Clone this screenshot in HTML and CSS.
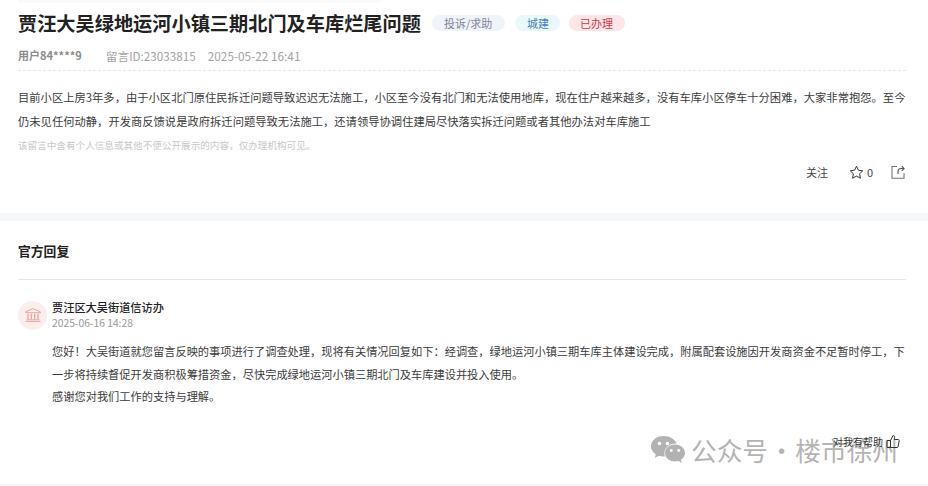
FILE: index.html
```html
<!DOCTYPE html>
<html lang="zh-CN">
<head>
<meta charset="utf-8">
<title>贾汪大吴绿地运河小镇三期北门及车库烂尾问题</title>
<link rel="stylesheet" href="styles.css">
</head>
<body>
<div class="page">
  <div class="top-strip"></div>
  <section class="message">
    <header class="title-row">
      <h1 class="title">贾汪大吴绿地运河小镇三期北门及车库烂尾问题</h1>
      <span class="tag tag-gray">投诉/求助</span>
      <span class="tag tag-blue">城建</span>
      <span class="tag tag-red">已办理</span>
    </header>
    <div class="meta">
      <span class="user">用户84****9</span>
      <span class="mid">留言ID:23033815</span>
      <span class="date">2025-05-22 16:41</span>
    </div>
    <p class="body-text">目前小区上房3年多，由于小区北门原住民拆迁问题导致迟迟无法施工，小区至今没有北门和无法使用地库，现在住户越来越多，没有车库小区停车十分困难，大家非常抱怨。至今仍未见任何动静，开发商反馈说是政府拆迁问题导致无法施工，还请领导协调住建局尽快落实拆迁问题或者其他办法对车库施工</p>
    <p class="notice">该留言中含有个人信息或其他不便公开展示的内容，仅办理机构可见。</p>
    <div class="actions">
      <span class="follow">关注</span>
      <span class="star">
        <svg class="icon-star" width="15" height="15" viewBox="0 0 15 15"><path d="M7.500 1.200l1.900 4 4.300.6-3.100 3 .8 4.400-3.900-2.100-3.900 2.100.8-4.400-3.100-3 4.300-.6z" fill="none" stroke="#333" stroke-width="1" stroke-linejoin="round"/></svg>
        <span>0</span>
      </span>
      <svg class="icon-share" width="14" height="14" viewBox="0 0 14 14"><path d="M6 1.500H1v11.800h12V8" fill="none" stroke="#777" stroke-width="1.100"/><path d="M7 9V6.500C7 4.500 8 3.500 10 3.500h2.800M10.800 1.200l2.300 2.300-2.300 2.300" fill="none" stroke="#555" stroke-width="1.100"/></svg>
    </div>
  </section>
  <div class="divider-band"></div>
  <section class="reply">
    <h2 class="reply-title">官方回复</h2>
    <div class="org">
      <div class="org-avatar">
        <svg width="16" height="14" viewBox="0 0 16 14"><path d="M8 .6L15.400 3.800v.9H.6v-.9z" fill="none" stroke="#e9a3a1" stroke-width="1" stroke-linejoin="round"/><path d="M3 5.800v5.400M6.300 5.800v5.400M9.700 5.800v5.400M13 5.800v5.400" stroke="#e9a3a1" stroke-width="1.300"/><path d="M1.500 11.800h13M.5 13.400h15" stroke="#e9a3a1" stroke-width="1"/></svg>
      </div>
      <div class="org-info">
        <div class="org-name">贾汪区大吴街道信访办</div>
        <div class="org-date">2025-06-16 14:28</div>
      </div>
    </div>
    <div class="reply-text">
      <p>您好！大吴街道就您留言反映的事项进行了调查处理，现将有关情况回复如下：经调查，绿地运河小镇三期车库主体建设完成，附属配套设施因开发商资金不足暂时停工，下一步将持续督促开发商积极筹措资金，尽快完成绿地运河小镇三期北门及车库建设并投入使用。</p>
      <p>感谢您对我们工作的支持与理解。</p>
    </div>
  </section>
  <div class="bottom-band"></div>
  <div class="watermark">
    <svg width="36" height="30" viewBox="0 0 36 30"><path d="M13.500 1C6.500 1 1 5.600 1 11.300c0 3.300 1.900 6.200 4.800 8.100L4.700 23l4.200-2.200c1.500.4 3 .7 4.600.7.500 0 1 0 1.400-.1-.3-1-.5-2-.5-3 0-5.600 5-10 11.300-10h.8C24.900 4.100 19.700 1 13.500 1z" fill="#b2b2b2"/><circle cx="9.500" cy="8.500" r="1.700" fill="#fff"/><circle cx="17.500" cy="8.500" r="1.700" fill="#fff"/><path d="M25 9.500c-5.700 0-10 3.800-10 8.500s4.300 8.500 10 8.500c1.200 0 2.300-.2 3.400-.5l3.400 1.900-.9-3.100c2.500-1.600 4.100-4 4.100-6.800 0-4.700-4.300-8.500-10-8.500z" fill="#b2b2b2"/><circle cx="21.300" cy="15.500" r="1.400" fill="#fff"/><circle cx="28.700" cy="15.500" r="1.400" fill="#fff"/></svg>
    <span>公众号 · 楼市徐州</span>
  </div>
  <div class="helpful">
    <span>对我有帮助</span>
    <svg width="14" height="15" viewBox="0 0 14 15"><path d="M4.500 6.500L7 1.500c1.200 0 1.800.8 1.600 2L8.200 5.500h4c.8 0 1.200.6 1 1.300l-1.200 6c-.1.500-.5.700-1 .7H4.500zM4.500 6.500H1v7h3.500" fill="none" stroke="#333" stroke-width="1"/></svg>
  </div>
</div>
</body>
</html>
```
FILE: styles.css
```css
* { box-sizing: border-box; }
html, body { margin: 0; padding: 0; background: #fff; }
body {
  font-family: "Noto Sans CJK SC", "Noto Sans", sans-serif;
  color: #333;
}
.page { position: relative; width: 928px; height: 486px; overflow: hidden; }
.top-strip { width: 363px; height: 3px; margin-left: 18px; background: #fafafb; }
.message { padding: 0 22px 0 18px; height: 210px; }
.title-row { display: flex; align-items: center; height: 40px; }
.title { margin: 0 11px 0 0; font-size: 19.200px; font-weight: 700; color: #222; line-height: 40px; white-space: nowrap; }
.tag { display: block; height: 16px; line-height: 16px; font-size: 11px; border-radius: 8px; padding: 0 12px; white-space: nowrap; }
.tag-gray { background: #f0f3f9; color: #7c8698; margin-right: 10px; width: 73px; }
.tag-blue { background: #ebf8fb; color: #4a80bd; margin-right: 9px; width: 45px; }
.tag-red { background: #fbe6e8; color: #cf3a4c; width: 56px; padding: 0 11px; }
.meta { display: flex; align-items: center; height: 28px; font-size: 11px; color: #a3a3a3; border-bottom: 1px dashed #e6e6e6; padding-bottom: 3px; }
.user { font-weight: 700; color: #8c8c8c; margin-right: 24px; }
.mid { margin-right: 12px; font-size: 11.700px; }
.date { font-size: 11.800px; }
.body-text { margin: 15px 0 0; font-size: 11.300px; line-height: 23.500px; color: #3c3c3c; }
.notice { margin: 0; font-size: 9.600px; line-height: 24px; color: #c8c8c8; }
.actions { display: flex; align-items: center; justify-content: flex-end; margin-top: 6px; height: 18px; font-size: 11px; color: #444; padding-right: 1px; }
.star { display: flex; align-items: center; gap: 3px; margin-left: 21px; }
.icon-share { margin-left: 18px; }
.divider-band { height: 8px; background: #f6f7f9; }
.reply { padding: 0 22px 0 18px; height: 263px; }
.reply-title { margin: 0; height: 59px; padding-top: 21px; line-height: 18px; font-size: 12.800px; font-weight: 700; color: #222; border-bottom: 1px solid #e6e6e6; }
.org { display: flex; align-items: center; gap: 5px; margin-top: 19px; height: 32px; }
.org-avatar { width: 29px; height: 29px; border-radius: 50%; background: #fdeeee; display: flex; align-items: center; justify-content: center; }
.org-name { font-size: 11.200px; font-weight: 500; line-height: 16px; color: #222; }
.org-date { font-size: 10.300px; line-height: 16px; color: #999; }
.reply-text { margin: 9px -6px 0 34px; font-size: 11.220px; line-height: 22.500px; color: #3c3c3c; }
.reply-text p { margin: 0; }
.bottom-band { height: 2px; background: #f7f7f8; }
.watermark { position: absolute; left: 650px; top: 431px; display: flex; align-items: center; gap: 5px; font-size: 25.700px; word-spacing: -5px; color: #b4b4b4; white-space: nowrap; }
.helpful { position: absolute; left: 833px; top: 434px; display: flex; align-items: center; gap: 3px; font-size: 10px; color: #333; white-space: nowrap; }
```
